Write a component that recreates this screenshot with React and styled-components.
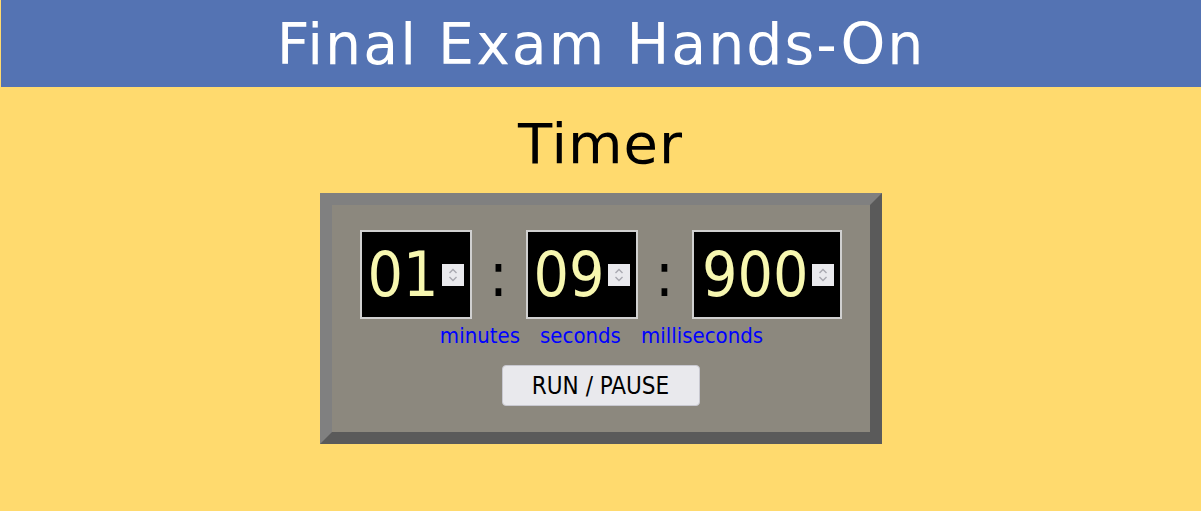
import React from 'react';
import styled, { createGlobalStyle } from 'styled-components';

const GlobalStyle = createGlobalStyle`
  html, body {
    margin: 0;
    padding: 0;
    background: #ffda6e;
    font-family: "DejaVu Sans Condensed", "DejaVu Sans", Tahoma, sans-serif;
    font-stretch: condensed;
  }
`;

const Page = styled.div`
  width: 100%;
  min-height: 511px;
  background: #ffda6e;
`;

const Header = styled.header`
  height: 87px;
  margin-left: 1px;
  background: #5473b3;
  color: white;
  display: flex;
  align-items: center;
  justify-content: center;
  font-family: "DejaVu Sans", Tahoma, sans-serif;
  font-stretch: normal;
  font-size: 57px;
  letter-spacing: 2px;
`;

const Title = styled.h2`
  margin: 0;
  padding-top: 24px;
  height: 82px;
  text-align: center;
  font-family: "DejaVu Sans", Tahoma, sans-serif;
  font-stretch: normal;
  font-size: 56px;
  letter-spacing: 1px;
  font-weight: normal;
  color: black;
`;

const Panel = styled.div`
  width: 538px;
  margin: 0 auto;
  background: #8c887e;
  border: 12px solid;
  border-color: #808080 #5a5a5a #5a5a5a #808080;
  padding: 25px 0 26px;
  display: flex;
  flex-direction: column;
  align-items: center;
`;

const Row = styled.div`
  display: flex;
  align-items: center;
`;

const Display = styled.div`
  width: ${props => props.width}px;
  height: 89px;
  box-sizing: border-box;
  background: black;
  border: 2px solid #d0d0d0;
  display: flex;
  align-items: center;
  justify-content: flex-end;
  padding-right: 6px;
  gap: 3px;
`;

const Digits = styled.span`
  color: #f7f7b0;
  font-size: 62px;
  line-height: 1;
`;

const Spinner = styled.span`
  width: 22px;
  height: 22px;
  background: #e9e9ed;
  display: flex;
  align-items: center;
  justify-content: center;
`;

const Colon = styled.span`
  width: 54px;
  text-align: center;
  font-size: 62px;
  line-height: 1;
  color: black;
`;

const Labels = styled.div`
  display: flex;
  gap: 20px;
  margin-top: 4px;
  margin-left: 2px;
  font-size: 22px;
  color: #0000ff;
`;

const Button = styled.button`
  margin-top: 17px;
  width: 198px;
  height: 41px;
  background: #e9e9ed;
  border: 1px solid #c8c8d0;
  border-radius: 4px;
  font-family: inherit;
  font-stretch: condensed;
  font-size: 24px;
  color: black;
`;

function SpinIcon() {
  return (
    <svg width="12" height="16" viewBox="0 0 12 16" fill="none" stroke="#a8a8b0" strokeWidth="1.4">
      <path d="M2.5 6 L6 2.5 L9.5 6" />
      <path d="M2.5 10 L6 13.5 L9.5 10" />
    </svg>
  );
}

function TimeBox({ value, width }) {
  return (
    <Display width={width}>
      <Digits>{value}</Digits>
      <Spinner><SpinIcon /></Spinner>
    </Display>
  );
}

export default function App() {
  return (
    <Page>
      <GlobalStyle />
      <Header>Final Exam Hands-On</Header>
      <Title>Timer</Title>
      <Panel>
        <Row>
          <TimeBox value="01" width={112} />
          <Colon>:</Colon>
          <TimeBox value="09" width={112} />
          <Colon>:</Colon>
          <TimeBox value="900" width={150} />
        </Row>
        <Labels>
          <span>minutes</span>
          <span>seconds</span>
          <span>milliseconds</span>
        </Labels>
        <Button>RUN / PAUSE</Button>
      </Panel>
    </Page>
  );
}
